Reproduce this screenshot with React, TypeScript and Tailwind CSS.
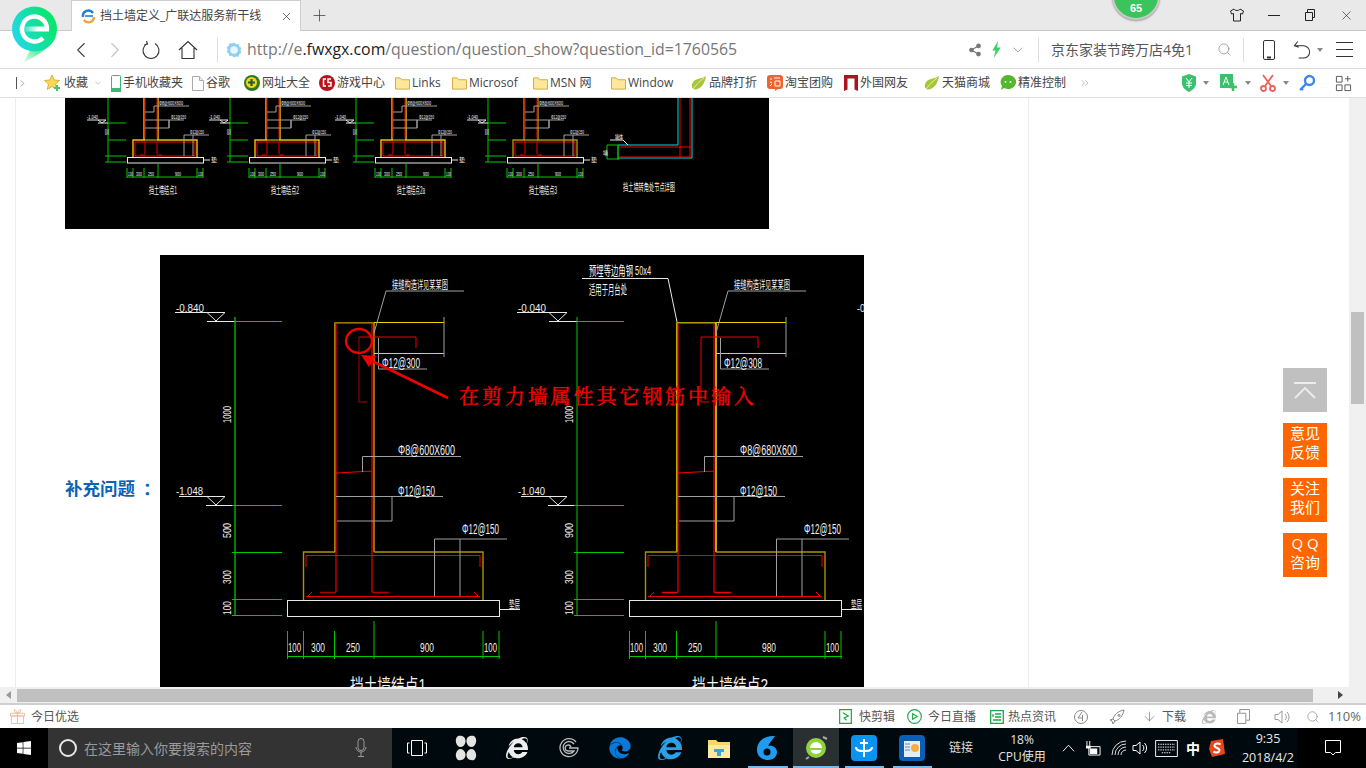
import { Plus, Search, X, ChevronDown, ChevronRight, ChevronLeft, ChevronsRight, Share2, ArrowDown } from "lucide-react";
import { FaEdge, FaInternetExplorer, FaWindows } from "react-icons/fa";

const UI_FONT = "font-['Open_Sans','Noto_Sans_CJK_SC',sans-serif]";
const Y = "#e6d800";
const O = "#d09a00";
const R = "#f00000";
const DR = "#b00000";
const G = "#00c800";
const W = "#e8e8e8";
const GY = "#a0a0a0";

// small text on the CAD sheets, squeezed to the width it has there
function Cad(props: { x: number; y: number; w: number; s: number; t: string; rot?: boolean; fill?: string }) {
  const { x, y, w, s, t, rot, fill } = props;
  return (
    <text
      x={x}
      y={y}
      fontSize={s}
      fill={fill ?? "#f2f2f2"}
      textLength={w}
      lengthAdjust="spacingAndGlyphs"
      fontFamily="'Liberation Sans','Noto Sans CJK SC',sans-serif"
      transform={rot ? `rotate(-90 ${x} ${y})` : undefined}
    >
      {t}
    </text>
  );
}

function SmallDetail({ dx, label, title, footColor = "#f0c400" }: { dx: number; label: string; title: string; footColor?: string }) {
  return (
    <g transform={`translate(${dx} 0)`} fill="none" strokeWidth="1">
      <path d="M43 0V64" stroke={G} />
      <path d="M43 25H61M43 42H61M40 58H61M40 64H61" stroke={G} />
      <path d="M33 22H41L37 25ZM22 22H33M33 25H43" stroke={W} />
      <Cad x={22} y={21} w={11} s={6} t={label} />
      <path d="M79 0V42H68V59M93 0V42H132V59" stroke={footColor} strokeWidth="1.4" />
      <path d="M79 42H93" stroke={Y} />
      <path d="M80 0V40M92 0V40M70 44H130V58H70ZM80 44V56M92 44V56M75 57H80M92 57H97" stroke={R} />
      <path d="M80 14H89V8H124M80 22H104V30H80M104 22V30M104 22H119M119 37H144M119 37V58M128 37V58" stroke={GY} />
      <rect x="62.5" y="59.5" width="76" height="5.5" stroke={W} />
      <path d="M138 62H145" stroke={W} />
      <Cad x={146} y={64} w={6} s={6} t="垫" />
      <Cad x={94} y={7} w={24} s={6} t="Φ8@600X600" />
      <Cad x={106} y={21} w={15} s={6} t="Φ12@150" />
      <Cad x={125} y={36} w={14} s={6} t="Φ12@150" />
      <Cad x={44} y={37} w={6} s={5} t="500" rot />
      <path d="M62 70V80M68 70V80M79 70V80M93 66V80M132 70V80M138 70V80M62 79H138" stroke={G} />
      <Cad x={63} y={78} w={5} s={6} t="100" />
      <Cad x={71} y={78} w={6} s={6} t="300" />
      <Cad x={83} y={78} w={6} s={6} t="250" />
      <Cad x={110} y={78} w={6} s={6} t="900" />
      <Cad x={133} y={78} w={5} s={6} t="100" />
      <Cad x={84} y={96} w={28} s={10} t={title} />
    </g>
  );
}

function TopSheet() {
  return (
    <svg viewBox="0 0 704 131" className="block w-[704px] h-[131px] bg-black">
      <SmallDetail dx={0} label="-1.040" title="挡土墙结点1" />
      <SmallDetail dx={122} label="-1.040" title="挡土墙结点2" />
      <SmallDetail dx={248} label="-1.040" title="挡土墙结点2a" />
      <SmallDetail dx={380} label="-1.040" title="挡土墙结点3" footColor="#a89400" />
      <g fill="none" strokeWidth="1">
        <path d="M627 0V60H553M613 0V47H553" stroke="#00d8e8" />
        <path d="M615 0V60M625 0V60M553 49H626M553 59H626" stroke={R} />
        <path d="M542 47H553V61H542ZM553 47V62" stroke={G} />
        <path d="M545 42H558L563 47" stroke={W} />
        <Cad x={550} y={41} w={8} s={6} t="墙体" />
        <Cad x={538} y={57} w={5} s={6} t="墙" />
        <Cad x={558} y={93} w={52} s={10} t="挡土墙转角处节点详图" />
      </g>
    </svg>
  );
}

function BigDetail({ dx, second }: { dx: number; second?: boolean }) {
  const rebar = second ? R : DR;
  return (
    <g transform={`translate(${dx} 0)`} fill="none" strokeWidth="1">
      {/* levels */}
      <path d="M15 57.5H65L56 66L47 57.5M47 66.5H75" stroke={W} />
      <path d="M19 241.5H65L56 250L47 241.5M46 250.5H75" stroke={W} />
      <path d="M75 62V360" stroke={second ? G : "#00a800"} strokeWidth={second ? 1 : 1.5} />
      <path d="M75 66.500H122M72 250.500H122M72 297.500H122M72 344.500H122M72 360.500H122" stroke={G} />
      <Cad x={16} y={57} w={28} s={11} t={second ? "-0.040" : "-0.840"} />
      <Cad x={16} y={240} w={27} s={11} t={second ? "-1.040" : "-1.048"} />
      <Cad x={71} y={168} w={17} s={11} t="1000" rot />
      <Cad x={71} y={283} w={15} s={11} t={second ? "900" : "500"} rot />
      <Cad x={71} y={329} w={14} s={11} t="300" rot />
      <Cad x={71} y={360} w={14} s={11} t="100" rot />
      {/* wall and footing */}
      <path d="M175 297V68H214" stroke={second ? Y : O} strokeWidth="1.6" />
      <path d="M214 68V297" stroke={second ? Y : "#a89400"} strokeWidth="1.6" />
      <path d="M175 297H143.500V345M214 297H323V345" stroke="#a89400" strokeWidth="1.4" />
      <path d="M214 67.500H284M214 98.500H284" stroke={Y} />
      {/* rebar */}
      <path d="M176 68.500H212M212 68V337M176 68V337M176 218L212 216" stroke={R} strokeWidth="1.2" />
      <path d="M199 82H256V93" stroke={R} />
      <path d="M199 82V147H207" stroke={second ? R : DR} />
      <path d="M146 312V300.500H320V312M146 341.500H320" stroke={R} />
      <path d="M160 337.500H176M212 337.500H229" stroke={rebar} strokeWidth="1.5" />
      <path d="M148 341L152 337M318 341L314 337" stroke={R} />
      {/* leaders */}
      <path d="M284 62V102" stroke={GY} />
      <path d="M214 78L226 36H304" stroke={GY} />
      <path d="M218.500 83V114H267" stroke={GY} />
      <path d="M202.500 217V201.500H301" stroke={GY} />
      <path d="M176 241.500H283M232 241.500V266H177" stroke={GY} />
      <path d="M274.500 341V284H347" stroke={GY} />
      <path d="M300 284V341" stroke={GY} />
      <rect x="127.5" y="345.5" width="212" height="16" stroke={W} />
      <path d="M339 354.500H360" stroke={W} />
      <Cad x={232} y={34} w={56} s={11} t="接缝构造详见某某图" />
      <Cad x={222} y={113} w={38} s={14} t={second ? "Φ12@308" : "Φ12@300"} />
      <Cad x={238} y={200} w={57} s={14} t={second ? "Φ8@680X600" : "Φ8@600X600"} />
      <Cad x={238} y={241} w={37} s={14} t="Φ12@150" />
      <Cad x={302} y={279} w={37} s={14} t="Φ12@150" />
      <Cad x={349} y={353} w={11} s={10} t="垫层" />
      {/* bottom dimensions */}
      <path d="M127.500 376V404M143.500 376V404M174.500 376V404M214 366V404M323 376V404M339 376V404" stroke={G} />
      <path d="M127 401.500H340" stroke={G} />
      <Cad x={128} y={397} w={13} s={13} t="100" />
      <Cad x={151} y={397} w={14} s={13} t="300" />
      <Cad x={186} y={397} w={14} s={13} t="250" />
      <Cad x={260} y={397} w={14} s={13} t={second ? "980" : "900"} />
      <Cad x={324} y={397} w={13} s={13} t="100" />
      <Cad x={190} y={436} w={76} s={17} t={second ? "挡土墙结点2" : "挡土墙结点1"} />
    </g>
  );
}

function MainSheet() {
  return (
    <svg viewBox="0 0 704 466" className="block w-[704px] h-[466px] bg-black shrink-0">
      <BigDetail dx={0} />
      <BigDetail dx={342} second />
      <g fill="none">
        <path d="M422 23.500H508L517 67" stroke={W} />
        <ellipse cx="199" cy="86" rx="13" ry="12" stroke={R} strokeWidth="2.4" />
        <path d="M288 143L208 104" stroke={R} strokeWidth="2.6" />
        <path d="M201 100L216 101L209 112Z" fill={R} />
      </g>
      <Cad x={429} y={20} w={62} s={13} t="预埋等边角钢 50x4" />
      <Cad x={429} y={39} w={38} s={13} t="适用于月台处" />
      <Cad x={697} y={57} w={8} s={11} t="-0" />
      <text
        x={299}
        y={149}
        fontSize="20"
        fill="#ff0000"
        stroke="#ff0000"
        strokeWidth="0.35"
        letterSpacing="2.9"
        fontFamily="'Noto Serif CJK SC','Noto Sans CJK SC',serif"
      >
        在剪力墙属性其它钢筋中输入
      </text>
    </svg>
  );
}

function Logo() {
  return (
    <svg viewBox="0 0 46 58" className="absolute left-[12px] top-[5px] w-[46px] h-[58px]">
      <defs>
        <linearGradient id="eg" x1="0" y1="0.8" x2="1" y2="0.4">
          <stop offset="0" stopColor="#25d8f0" />
          <stop offset="0.5" stopColor="#15dfa8" />
          <stop offset="1" stopColor="#05e866" />
        </linearGradient>
        <linearGradient id="tail" x1="1" y1="0" x2="0" y2="1">
          <stop offset="0" stopColor="#05e866" />
          <stop offset="0.55" stopColor="#5cf09a" />
          <stop offset="1" stopColor="#f0fdf4" />
        </linearGradient>
        <linearGradient id="bar" x1="0" y1="0" x2="1" y2="0">
          <stop offset="0" stopColor="#ffffff" stopOpacity="0" />
          <stop offset="0.6" stopColor="#ffffff" />
        </linearGradient>
      </defs>
      <path d="M44 32C39 42 26 50 11 58L20 42Z" fill="url(#tail)" />
      <circle cx="22.5" cy="24" r="22.5" fill="url(#eg)" />
      <path d="M35 24A12.500 12.500 0 1 0 31 33.200" fill="none" stroke="#fff" strokeWidth="4.500" />
      <path d="M10 21.500H37V26.500H10Z" fill="url(#bar)" />
    </svg>
  );
}

function TabBar() {
  return (
    <div className="relative flex h-[31px] shrink-0 items-end border-b border-[#c8c8c8] bg-[#e9e9e9]">
      <div className="ml-[71px] flex h-[31px] w-[230px] items-center border-x border-t border-[#cfcfcf] bg-white -mb-px">
        <svg viewBox="0 0 16 16" className="ml-[8px] w-[16px] h-[16px]">
          <path d="M3 9a5.500 5.500 0 0 1 10-4" fill="none" stroke="#1f7fd6" strokeWidth="2.4" />
          <path d="M14 9a5.500 5.500 0 0 1-10 3" fill="none" stroke="#f3a22e" strokeWidth="2.4" />
          <path d="M5 8h8" stroke="#1f7fd6" strokeWidth="1.6" />
        </svg>
        <span className="ml-[4px] text-[12px] text-[#444] w-[170px] whitespace-nowrap">挡土墙定义_广联达服务新干线</span>
        <X size={13} strokeWidth={1.3} className="ml-[10px] text-[#333]" />
      </div>
      <div className="flex h-[30px] w-[36px] items-center justify-center">
        <Plus size={19} strokeWidth={1} className="text-[#444]" />
      </div>
      <div className="flex-1" />
      <div className="flex h-[30px] items-center text-[#222]">
        <div className="flex w-[37px] justify-center">
          <svg viewBox="0 0 16 16" className="w-[16px] h-[16px]" fill="none" stroke="#222" strokeWidth="1">
            <path d="M5 2 1.500 4l1 3L4.500 6.500V14h7V6.500L13.500 7l1-3L11 2C10 4 6 4 5 2Z" />
          </svg>
        </div>
        <div className="flex w-[37px] justify-center"><div className="h-px w-[12px] bg-[#222]" /></div>
        <div className="flex w-[36px] justify-center">
          <svg viewBox="0 0 12 12" className="w-[12px] h-[12px]" fill="none" stroke="#222" strokeWidth="1">
            <path d="M1.500 3.500h7v8h-7zM3.500 3.500v-3h7v8h-2" />
          </svg>
        </div>
        <div className="flex w-[37px] justify-center mr-[1px]"><X size={15} strokeWidth={1} /></div>
      </div>
      {/* score bubble hanging from the top edge */}
      <div className="absolute left-[1112px] top-[-28px] flex h-[48px] w-[48px] items-end justify-center rounded-full border-[2px] border-[#c7c9c7] bg-[#3cc35c] pb-[3px] shadow-[0_1px_2px_rgba(0,0,0,0.35)]">
        <span className="text-[11px] font-bold leading-[14px] text-white font-['Liberation_Sans',sans-serif]">65</span>
      </div>
    </div>
  );
}

function AddressBar() {
  return (
    <div className={`flex h-[38px] shrink-0 items-center border-b border-[#dcdcdc] bg-white pl-[64px] ${UI_FONT}`}>
      <div className="flex w-[34px] justify-center"><ChevronLeft size={26} strokeWidth={1} className="text-[#444]" /></div>
      <div className="flex w-[34px] justify-center"><ChevronRight size={26} strokeWidth={1} className="text-[#c4c4c4]" /></div>
      <div className="flex w-[38px] justify-center">
        <svg viewBox="0 0 20 20" className="w-[20px] h-[20px]" fill="none" stroke="#333" strokeWidth="1.1">
          <path d="M6 3.500a8 8 0 1 0 8 0M5.500 1 6.500 4 3.500 4.500" />
        </svg>
      </div>
      <div className="flex w-[36px] justify-center">
        <svg viewBox="0 0 20 20" className="w-[20px] h-[20px]" fill="none" stroke="#333" strokeWidth="1.1">
          <path d="M1 10 10 1.500 19 10M4 8V18.500H16V8" />
        </svg>
      </div>
      <div className="ml-[11px] h-[24px] w-px bg-[#dedede]" />
      <svg viewBox="0 0 16 16" className="ml-[8px] w-[16px] h-[16px]">
        <path d="M8 .5l2 1.700 2.600-.2.600 2.500 2.200 1.500-1 2.400 1 2.400-2.200 1.400-.6 2.500-2.600-.2L8 15.500l-2-1.700-2.600.2-.6-2.500L.6 10.100l1-2.400-1-2.400 2.200-1.500.6-2.500 2.600.2z" fill="#8fd0f2" />
        <circle cx="8" cy="8" r="3.800" fill="#eaf7fe" />
      </svg>
      <div className="ml-[5px] w-[717px] whitespace-nowrap text-[15.850px] text-[#777]">
        http://e<span className="text-[#1c1c1c]">.fwxgx.com</span>/question/question_show?question_id=1760565
      </div>
      <div className="flex w-[21px] justify-center"><Share2 size={14} className="text-[#777]" fill="#777" /></div>
      <div className="flex w-[22px] justify-center">
        <svg viewBox="0 0 10 16" className="w-[11px] h-[17px]"><path d="M6.500 0 1 9h3L2.500 16 9 6H5.500Z" fill="#3ecf68" /></svg>
      </div>
      <div className="flex w-[22px] justify-center"><ChevronDown size={16} strokeWidth={1} className="text-[#777]" /></div>
      <div className="ml-[9px] h-[24px] w-px bg-[#dedede]" />
      <div className="ml-[12px] w-[166px] whitespace-nowrap text-[14px] text-[#555]">京东家装节跨万店4免1</div>
      <Search size={15} strokeWidth={1} className="text-[#777]" />
      <div className="ml-[11px] h-[24px] w-px bg-[#dedede]" />
      <div className="ml-[13px] flex w-[24px] justify-center">
        <svg viewBox="0 0 14 20" className="w-[14px] h-[20px]" fill="none" stroke="#333">
          <rect x="1.500" y="0.500" width="11" height="19" rx="1.500" />
          <path d="M5 17.500h4" strokeWidth="2" />
        </svg>
      </div>
      <div className="ml-[9px] flex w-[24px] justify-center">
        <svg viewBox="0 0 20 20" className="w-[19px] h-[20px]" fill="none" stroke="#333" strokeWidth="1.100">
          <path d="M5 1 1.500 5.500 6 7M1.500 5.500H11a6.500 6.500 0 0 1 0 13H6" />
        </svg>
      </div>
      <svg viewBox="0 0 6 4" className="ml-[3px] w-[6px] h-[4px]"><path d="M0 0h6L3 4Z" fill="#888" /></svg>
      <div className="ml-[13px] flex w-[20px] flex-col gap-[6px]">
        <div className="h-px w-[17px] bg-[#333]" />
        <div className="h-px w-[17px] bg-[#333]" />
        <div className="h-px w-[17px] bg-[#333]" />
      </div>
    </div>
  );
}

const FolderIcon = () => (
  <svg viewBox="0 0 16 14" className="w-[15px] h-[14px] shrink-0">
    <path d="M.5 1.500h5l1.500 2h8.500v10H.5z" fill="#fde79a" stroke="#d6a73a" />
  </svg>
);

const LeafIcon = () => (
  <svg viewBox="0 0 16 14" className="w-[16px] h-[14px] shrink-0">
    <path d="M15 0C14 8 9 14 3 13.500 0 12 0 8 3 5 6 2 11 3 15 0Z" fill="#a7c73a" />
    <path d="M2 13C5 9 8 6 13 2" stroke="#e6f0b8" fill="none" />
  </svg>
);

const BOOKMARKS = [
  { label: "收藏", cls: "w-[67px]", icon: <svg viewBox="0 0 18 18" className="w-[18px] h-[18px] shrink-0"><path d="M8 1l2.200 5 5.300.5-4 3.500 1.200 5.300L8 12.500 3.300 15.300 4.500 10 .5 6.500 5.800 6Z" fill="#f8d95a" stroke="#e0b030" /><path d="M13 11v6M10 14h6" stroke="#4fbf6a" strokeWidth="2" /></svg> },
  { label: "手机收藏夹", cls: "w-[81px]", icon: <svg viewBox="0 0 10 17" className="w-[10px] h-[17px] shrink-0"><rect x=".5" y=".5" width="9" height="16" rx="1" fill="#fff" stroke="#3cb878" /><rect x="0" y="13" width="10" height="4" fill="#3cb878" /></svg> },
  { label: "谷歌", cls: "w-[52px]", icon: <svg viewBox="0 0 12 15" className="w-[12px] h-[15px] shrink-0"><path d="M.5.5h7l4 4v10H.5z" fill="#fff" stroke="#aaa" /><path d="M7.500.5v4h4" fill="#eee" stroke="#aaa" /></svg> },
  { label: "网址大全", cls: "w-[75px]", icon: <svg viewBox="0 0 16 16" className="w-[16px] h-[16px] shrink-0"><circle cx="8" cy="8" r="8" fill="#2d7a22" /><circle cx="7.500" cy="7.500" r="5.500" fill="#f4d21f" /><path d="M7.500 4v7M4 7.500h7" stroke="#22601a" strokeWidth="2.200" /></svg> },
  { label: "游戏中心", cls: "w-[76px]", icon: <svg viewBox="0 0 16 16" className="w-[16px] h-[16px] shrink-0"><circle cx="8" cy="8" r="8" fill="#b8121c" /><path d="M7 4H4.500V11H7M12 4H9V7.500H12V11H9" fill="none" stroke="#fff" strokeWidth="1.500" /></svg> },
  { label: "Links", cls: "w-[57px]", icon: <FolderIcon /> },
  { label: "Microsof", cls: "w-[81px]", icon: <FolderIcon /> },
  { label: "MSN 网", cls: "w-[78px]", icon: <FolderIcon /> },
  { label: "Window", cls: "w-[80px]", icon: <FolderIcon /> },
  { label: "品牌打折", cls: "w-[76px]", icon: <LeafIcon /> },
  { label: "淘宝团购", cls: "w-[77px]", icon: <svg viewBox="0 0 16 16" className="w-[16px] h-[16px] shrink-0"><rect width="16" height="14" rx="3" fill="#f2652a" /><path d="M8 14v2l3-2" fill="#f2652a" /><path d="M3 4h2M3 7l2 1M3 11l2-2M7 3h6M8 6h5v5H8z" stroke="#fff" fill="none" /></svg> },
  { label: "外国网友", cls: "w-[80px]", icon: <svg viewBox="0 0 14 16" className="w-[14px] h-[16px] shrink-0"><path d="M0 0h14v16l-3.500-1.500V3.500h-7V14.500L0 16Z" fill="#a81420" /></svg> },
  { label: "天猫商城", cls: "w-[76px]", icon: <LeafIcon /> },
  { label: "精准控制", cls: "w-[80px]", icon: <svg viewBox="0 0 16 16" className="w-[16px] h-[16px] shrink-0"><path d="M8 0a8 7 0 1 1-4 13l-3 2 1-4A7.500 7 0 0 1 8 0Z" fill="#53b82c" /><circle cx="5.500" cy="7" r="1" fill="#fff" /><circle cx="10.500" cy="7" r="1" fill="#fff" /></svg> },
];

const Caret = () => <svg viewBox="0 0 6 4" className="w-[6px] h-[4px]"><path d="M0 0h6L3 4Z" fill="#888" /></svg>;

function BookmarkBar() {
  return (
    <div className={`flex h-[29px] shrink-0 items-center border-b border-[#e2e2e2] bg-white ${UI_FONT} text-[12px] text-[#444]`}>
      <div className="flex w-[44px] items-center pl-[16px]">
        <div className="h-[12px] w-px bg-[#555]" />
        <ChevronRight size={11} strokeWidth={1.2} className="text-[#555]" />
      </div>
      {BOOKMARKS.map((b) => (
        <div key={b.label} className={`flex items-center gap-[2px] whitespace-nowrap ${b.cls}`}>
          {b.icon}
          <span>{b.label}</span>
          {b.label === "收藏" && <ChevronDown size={10} strokeWidth={1} className="ml-[3px] text-[#777]" />}
        </div>
      ))}
      <ChevronsRight size={12} strokeWidth={1} className="-ml-[1px] text-[#888]" />
      <div className="ml-[90px] flex items-center">
        <svg viewBox="0 0 16 18" className="w-[16px] h-[18px]"><path d="M8 0l7 2.500V9c0 4-3 7-7 9-4-2-7-5-7-9V2.500Z" fill="#3cc06c" /><path d="M5 4l3 4 3-4M8 8v6M5 9h6M5 11.500h6" stroke="#fff" fill="none" /></svg>
        <div className="ml-[6px]"><Caret /></div>
        <svg viewBox="0 0 18 18" className="ml-[11px] w-[18px] h-[18px]"><rect width="13" height="14" fill="#3cc06c" /><path d="M3 11 6 3l3 8M4 8h4" stroke="#fff" fill="none" /><path d="M9 13h8M13 9v8" stroke="#3cc06c" strokeWidth="2.500" /></svg>
        <div className="ml-[7px]"><Caret /></div>
        <svg viewBox="0 0 16 18" className="ml-[9px] w-[16px] h-[18px]" fill="none" stroke="#f0625a" strokeWidth="1.800"><path d="M3 1l8 11M13 1 5 12" /><circle cx="3.500" cy="14.500" r="2.500" /><circle cx="12.500" cy="14.500" r="2.500" /></svg>
        <div className="ml-[7px]"><Caret /></div>
        <svg viewBox="0 0 18 18" className="ml-[9px] w-[18px] h-[18px]" fill="none" stroke="#3a88e8" strokeWidth="2.400"><circle cx="11.500" cy="6.500" r="4.500" /><path d="M8 10l-6 6M3 14l2 2" /></svg>
        <svg viewBox="0 0 18 18" className="ml-[19px] w-[17px] h-[17px]" fill="none" stroke="#555"><path d="M1.500 1.500h6v6h-6zM1.500 10.500h6v6h-6zM10.500 10.500h6v6h-6zM13.500 1v6M10.500 4h6" /></svg>
      </div>
    </div>
  );
}

function Floats() {
  const cls = "flex h-[44px] w-[44px] items-center justify-center bg-[#ff6600] pb-[5px] text-center text-[15px] leading-[19px] text-white";
  return (
    <div className={`absolute right-[22px] top-[270px] flex flex-col gap-[11px] ${UI_FONT}`}>
      <div className="flex h-[44px] w-[44px] items-center justify-center bg-[#c0c0c0]">
        <svg viewBox="0 0 24 18" className="w-[24px] h-[18px]" fill="none" stroke="#ececec" strokeWidth="1.800">
          <path d="M1 2h22M2 17 12 7l10 10" />
        </svg>
      </div>
      <div className={cls}>意见<br />反馈</div>
      <div className={cls}>关注<br />我们</div>
      <div className={cls}>Q Q<br />咨询</div>
    </div>
  );
}

function Page() {
  return (
    <div className="flex min-h-0 flex-1">
      <div className="relative min-w-0 flex-1 overflow-hidden bg-white">
        <div className="ml-[15px] h-full w-[1014px] border-x border-[#ececec] pl-[49px]">
          <TopSheet />
          <div className="mt-[26px] flex items-center">
            <div className="w-[95px] shrink-0 whitespace-nowrap text-[17.500px] font-bold text-[#0b63b3] font-['Noto_Sans_CJK_SC',sans-serif]">
              补充问题<span className="ml-[8px]">：</span>
            </div>
            <MainSheet />
          </div>
        </div>
        <Floats />
      </div>
      <div className="w-[17px] shrink-0 bg-[#f0f0f0] px-[2px] pt-[214px]">
        <div className="h-[92px] bg-[#c0c0c0]" />
      </div>
    </div>
  );
}

function HScroll() {
  return (
    <div className="flex h-[18px] shrink-0 items-center border-b-2 border-[#cfcfcf] bg-[#f0f0f0]">
      <div className="flex w-[17px] justify-center">
        <svg viewBox="0 0 5 8" className="w-[5px] h-[8px]"><path d="M5 0v8L0 4Z" fill="#999" /></svg>
      </div>
      <div className="h-[13px] w-[1296px] bg-[#c0c0c0]" />
      <div className="ml-[25px] flex w-[5px] justify-center">
        <svg viewBox="0 0 5 8" className="w-[5px] h-[8px]"><path d="M0 0v8l5-4Z" fill="#444" /></svg>
      </div>
    </div>
  );
}

function StatusBar() {
  return (
    <div className={`flex h-[23px] shrink-0 items-center bg-white text-[12px] text-[#555] ${UI_FONT}`}>
      <svg viewBox="0 0 16 16" className="ml-[10px] w-[15px] h-[15px]" fill="none" stroke="#f5b49c">
        <path d="M.5 4.500h15v3H.5zM1.500 7.500h13v8h-13zM8 4.500v11M8 4.500C5 4.500 3.500 1 5 .8 6.500.5 8 4.500 8 4.500S9.500.5 11 .8c1.500.2 0 3.700-3 3.700" />
      </svg>
      <span className="ml-[6px]">今日优选</span>
      <div className="flex-1" />
      <svg viewBox="0 0 14 16" className="w-[13px] h-[15px]" fill="none" stroke="#1aa84a" strokeWidth="1.300"><path d="M.7.700h12.600v14.600H.7z" /><path d="M4 4l6 3.500L5.500 9.500 8 12" /></svg>
      <span className="ml-[7px] w-[37px] whitespace-nowrap">快剪辑</span>
      <svg viewBox="0 0 16 16" className="ml-[11px] w-[15px] h-[15px]" fill="none" stroke="#1aa84a" strokeWidth="1.200"><circle cx="8" cy="8" r="7.300" /><path d="M6 5l5 3-5 3z" /></svg>
      <span className="ml-[6px] w-[49px] whitespace-nowrap">今日直播</span>
      <svg viewBox="0 0 14 14" className="ml-[13px] w-[14px] h-[14px]" fill="none" stroke="#1aa84a" strokeWidth="1.300"><path d="M.7.700h12.600v12.600H.7zM3 4v3M5 4h6M5 7h6M3 10h8" /></svg>
      <span className="ml-[4px] w-[49px] whitespace-nowrap">热点资讯</span>
      <svg viewBox="0 0 16 16" className="ml-[16px] w-[16px] h-[16px]" fill="none" stroke="#888"><circle cx="8" cy="8" r="6.500" /><path d="M9 3 5 9h5M9.500 6v6" /></svg>
      <svg viewBox="0 0 16 16" className="ml-[20px] w-[16px] h-[16px]" fill="none" stroke="#888"><path d="M15 1C9 2 5 6 4 10l2 2c4-1 8-5 9-11ZM4 10l-3 1 2 1 1 3 2-3M10 5.500a1 1 0 1 0 .1 0" /></svg>
      <ArrowDown size={15} strokeWidth={1} className="ml-[17px] text-[#666]" />
      <span className="ml-[5px] w-[24px] whitespace-nowrap">下载</span>
      <FaInternetExplorer size={14} className="ml-[16px] text-[#bbb]" />
      <svg viewBox="0 0 14 16" className="ml-[21px] w-[13px] h-[15px]" fill="none" stroke="#888"><path d="M.5 4.500h9v11h-9zM3 4V.5h10.500V12H10" /></svg>
      <svg viewBox="0 0 16 16" className="ml-[24px] w-[16px] h-[16px]" fill="none" stroke="#999"><path d="M1 5.500h3L8 2v12L4 10.500H1zM11 5a4 4 0 0 1 0 6M13 3a7 7 0 0 1 0 10" /></svg>
      <Search size={14} strokeWidth={1} className="ml-[16px] text-[#777]" />
      <span className="ml-[8px] mr-[5px] text-[13px] text-[#666]">110%</span>
    </div>
  );
}

function TaskCell({ cls, children }: { cls: string; children: React.ReactNode }) {
  return <div className={`relative flex h-full shrink-0 items-center justify-center ${cls}`}>{children}</div>;
}

function Taskbar() {
  return (
    <div className={`flex h-[40px] shrink-0 bg-[#00090d] text-white ${UI_FONT}`}>
      <TaskCell cls="w-[48px] bg-black"><FaWindows size={16} /></TaskCell>
      <div className="flex w-[344px] shrink-0 items-center bg-[#333333]">
        <div className="ml-[11px] h-[18px] w-[18px] rounded-full border-[2.500px] border-[#e8e8e8]" />
        <span className="ml-[7px] w-[271px] text-[14px] text-[#9a9a9a]">在这里输入你要搜索的内容</span>
        <svg viewBox="0 0 12 20" className="w-[12px] h-[20px]" fill="none" stroke="#9a9a9a"><rect x="3" y=".5" width="6" height="12" rx="3" /><path d="M1 9a5 5 0 0 0 10 0M6 14v4M3 18.500h6" /></svg>
      </div>
      <TaskCell cls="w-[49px]">
        <svg viewBox="0 0 20 16" className="w-[20px] h-[16px]" fill="none" stroke="#fff"><path d="M4.500.5h11v15h-11zM2.500 3H.5v10h2M17.500 3h2v10h-2" /></svg>
      </TaskCell>
      <TaskCell cls="w-[50px]">
        <svg viewBox="0 0 22 26" className="w-[22px] h-[26px]" fill="#e4e4e4"><path d="M3 1c4-1 8 1 7.500 6C10 10 8 12 5 12 1 11-1 4 3 1ZM19 1c-4-1-8 1-7.500 6 .5 3 2.500 5 5.500 5 4-1 6-8 2-11ZM3 25c4 1 8-1 7.500-6C10 16 8 14 5 14c-4 1-6 8-2 11ZM19 25c-4 1-8-1-7.500-6 .5-3 2.500-5 5.500-5 4 1 6 8 2 11Z" /></svg>
      </TaskCell>
      <TaskCell cls="w-[52px]"><FaInternetExplorer size={22} className="text-[#eeeeee]" /></TaskCell>
      <TaskCell cls="w-[52px]">
        <svg viewBox="0 0 20 20" className="w-[20px] h-[20px]" fill="none" stroke="#bbb" strokeWidth="1.300"><path d="M17 4A9 9 0 1 0 19 10H10M15 6A6 6 0 1 0 15 13H9a3 3 0 1 1 3-4" /></svg>
      </TaskCell>
      <TaskCell cls="w-[50px]"><FaEdge size={22} className="text-[#0a78d7]" /></TaskCell>
      <TaskCell cls="w-[50px]"><FaInternetExplorer size={24} className="text-[#2aa0e8]" /></TaskCell>
      <TaskCell cls="w-[48px]">
        <svg viewBox="0 0 22 20" className="w-[22px] h-[20px]"><path d="M0 2h8l2 2h12v16H0z" fill="#f5d76e" /><path d="M0 7h22v13H0z" fill="#fbe9a4" /><path d="M6 11h10v3h-3v4H9v-4H6z" fill="#3ba5e0" /></svg>
      </TaskCell>
      <TaskCell cls="w-[48px]">
        <svg viewBox="0 0 24 26" className="w-[24px] h-[26px]"><path d="M20 1C10 0 2 6 2 15c0 6 5 10 11 10s9-4 9-8-4-7-9-6c2-4 5-7 7-10Z" fill="#1f9bf0" /><circle cx="12" cy="17" r="3.500" fill="#00090d" /></svg>
        <div className="absolute bottom-0 left-[5px] h-[2px] w-[40px] bg-[#76b9ed]" />
      </TaskCell>
      <TaskCell cls="ml-[2px] w-[46px] bg-[#2a3032]">
        <svg viewBox="0 0 26 26" className="w-[26px] h-[26px]"><circle cx="13" cy="13" r="10" fill="#8fd23a" /><circle cx="13" cy="13" r="6" fill="#fff" /><path d="M5 13h16v2H5z" fill="#8fd23a" /><path d="M20 2 24 4M3 24l3-2" stroke="#aaa" strokeWidth="2" /></svg>
        <div className="absolute bottom-0 left-0 h-[2px] w-full bg-[#76b9ed]" />
      </TaskCell>
      <TaskCell cls="ml-[2px] w-[46px]">
        <svg viewBox="0 0 26 26" className="w-[26px] h-[26px]"><rect width="26" height="26" rx="4" fill="#0b93f0" /><path d="M13 4v18M9 8h8M5 12c0 4 4 4 8 4s8 0 8-4" stroke="#fff" strokeWidth="2" fill="none" /></svg>
        <div className="absolute bottom-0 left-[4px] h-[2px] w-[39px] bg-[#76b9ed]" />
      </TaskCell>
      <TaskCell cls="ml-[2px] w-[46px]">
        <svg viewBox="0 0 26 26" className="w-[26px] h-[26px]"><rect width="26" height="26" rx="4" fill="#0a5fb5" /><path d="M5 6h8v16H5zM13 6h8v16h-8z" fill="#e4eef8" /><circle cx="16" cy="13" r="4" fill="#f0b040" /><path d="M6 9h5M6 12h5M6 15h5" stroke="#5a88b8" /></svg>
        <div className="absolute bottom-0 left-[4px] h-[2px] w-[39px] bg-[#76b9ed]" />
      </TaskCell>
      <span className="ml-[14px] self-center text-[12px] text-[#ddd] w-[40px] whitespace-nowrap">链接</span>
      <div className="ml-[3px] flex w-[60px] flex-col items-center justify-center text-[12px] leading-[17px] text-[#e4e4e4]">
        <span>18%</span>
        <span className="whitespace-nowrap">CPU使用</span>
      </div>
      <div className="ml-[10px] flex items-center">
        <svg viewBox="0 0 14 8" className="w-[13px] h-[8px]" fill="none" stroke="#fff"><path d="M1 7.500 7 1l6 6.500" /></svg>
        <svg viewBox="0 0 18 16" className="ml-[10px] w-[17px] h-[15px]" fill="#fff"><path d="M2 0v5M5 0v5" stroke="#fff" /><path d="M1 5h5v3H1z" /><path d="M4 6h12v9H4z" fill="none" stroke="#fff" /><path d="M5 8h8v6H5z" /></svg>
        <svg viewBox="0 0 16 16" className="ml-[9px] w-[16px] h-[16px]" fill="none" stroke="#ddd"><path d="M1 15A14 14 0 0 1 15 1M4 15A11 11 0 0 1 15 4M7 15a8 8 0 0 1 8-8M10 15a5 5 0 0 1 5-5" /></svg>
        <svg viewBox="0 0 16 16" className="ml-[5px] w-[16px] h-[16px]" fill="none" stroke="#fff"><path d="M1 5.500h3L8 2v12L4 10.500H1zM10.500 5a4 4 0 0 1 0 6M12.500 3a7 7 0 0 1 0 10" /></svg>
        <svg viewBox="0 0 24 18" className="ml-[7px] w-[23px] h-[17px]" fill="none" stroke="#fff"><path d="M.5.500h23v17H.5z" /><path d="M3 4.500h18M3 7.500h18M3 10.500h18M7 13.500h10" strokeDasharray="1.500 1" /></svg>
        <span className="ml-[8px] w-[14px] text-[14px] font-bold">中</span>
        <svg viewBox="0 0 16 18" className="ml-[9px] w-[16px] h-[18px]"><path d="M2 2l12-2 2 15-13 3-3-8Z" fill="#e8461c" /><path d="M11.500 5.500C10 4 6 4 5.500 6.500S11 9 10.500 11.500 6 14 4.500 12.500" stroke="#fff" strokeWidth="2" fill="none" /></svg>
      </div>
      <div className="ml-[14px] flex w-[58px] flex-col items-center justify-center text-[12.500px] leading-[19px] text-[#e8e8e8]">
        <span>9:35</span>
        <span className="whitespace-nowrap">2018/4/2</span>
      </div>
      <div className="ml-[0px] flex flex-1 items-center bg-black pl-[28px]">
        <svg viewBox="0 0 16 16" className="w-[16px] h-[16px]" fill="none" stroke="#fff"><path d="M.5.500h15v12h-5L8 15l-2.500-2.500h-5z" /></svg>
      </div>
    </div>
  );
}

export default function App() {
  return (
    <div className={`relative flex h-[768px] w-[1366px] flex-col overflow-hidden ${UI_FONT}`}>
      <TabBar />
      <AddressBar />
      <BookmarkBar />
      <Page />
      <HScroll />
      <StatusBar />
      <Taskbar />
      <Logo />
    </div>
  );
}
